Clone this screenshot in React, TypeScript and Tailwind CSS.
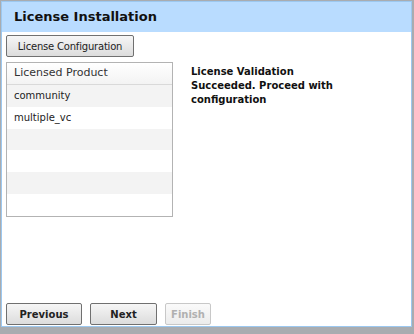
import React from "react";

const font = { fontFamily: '"DejaVu Sans", Verdana, sans-serif' };

export default function App() {
  const rows = ["community", "multiple_vc", "", "", "", ""];
  return (
    <div className="w-[414px] h-[334px] bg-[#a9acb0] overflow-hidden" style={font}>
      <div className="ml-[1px] mt-[1px] w-[411px] h-[326px] border border-[#9cc8f0] bg-white flex flex-col">
        <div className="h-[30px] bg-[#b9dcff] flex items-center pl-[12px] text-[13px] font-bold text-[#111]">
          License Installation
        </div>
        <div className="flex-1 flex flex-col px-[4px] pt-[3px] pb-0">
          <button className="self-start h-[22px] w-[128px] border border-[#707070] rounded-[2px] bg-gradient-to-b from-[#f6f6f6] to-[#dcdcdc] text-[10px] text-[#222] tracking-[-0.2px]">
            License Configuration
          </button>
          <div className="flex mt-[5px]">
            <div className="w-[167px] h-[155px] border border-[#b3b3b3] flex flex-col">
              <div className="h-[22px] flex items-center pl-[7px] text-[11px] text-[#333] border-b border-[#d9d9d9] bg-gradient-to-b from-white to-[#f3f3f3]">
                Licensed Product
              </div>
              {rows.map((r, i) => (
                <div
                  key={i}
                  className={`h-[22px] flex items-center pl-[7px] text-[10px] text-[#222] ${i % 2 === 0 ? "bg-[#f3f3f3]" : "bg-white"}`}
                >
                  {r}
                </div>
              ))}
            </div>
            <div className="ml-[18px] mt-[3px] w-[150px] text-[10px] font-bold leading-[14px] text-[#111]">
              License Validation Succeeded. Proceed with configuration
            </div>
          </div>
          <div className="mt-auto mb-[1px] flex gap-[8px]">
            <button className="h-[22px] w-[76px] border border-[#707070] rounded-[2px] bg-gradient-to-b from-[#f6f6f6] to-[#dcdcdc] text-[10px] font-bold text-[#222]">
              Previous
            </button>
            <button className="h-[22px] w-[67px] border border-[#707070] rounded-[2px] bg-gradient-to-b from-[#f6f6f6] to-[#dcdcdc] text-[10px] font-bold text-[#222]">
              Next
            </button>
            <button className="h-[22px] w-[46px] border border-[#c8c8c8] rounded-[2px] bg-gradient-to-b from-[#fafafa] to-[#ececec] text-[10px] font-bold text-[#b0b0b0]">
              Finish
            </button>
          </div>
        </div>
      </div>
    </div>
  );
}
